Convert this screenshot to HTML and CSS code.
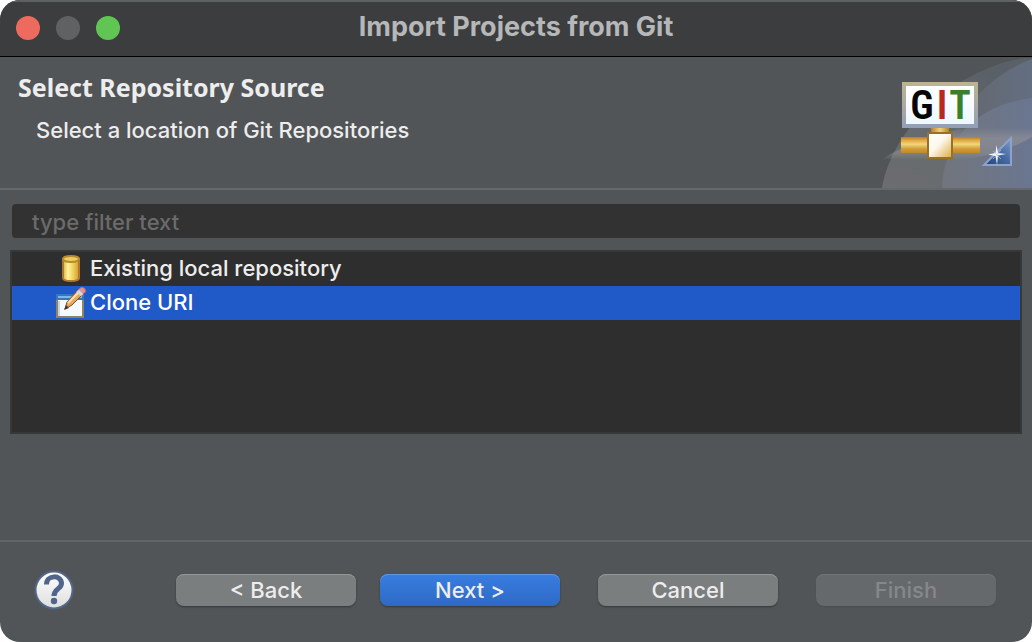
FILE: index.html
```html
<!DOCTYPE html>
<html lang="en">
<head>
<meta charset="utf-8">
<meta name="viewport" content="width=device-width, initial-scale=1">
<title>Import Projects from Git</title>
<link rel="stylesheet" href="styles.css">
</head>
<body>
<main class="dialog">
  <header class="titlebar">
    <div class="lights">
      <button class="light light-close" type="button" aria-label="Close"></button>
      <button class="light light-minimize" type="button" aria-label="Minimize" disabled></button>
      <button class="light light-zoom" type="button" aria-label="Zoom"></button>
    </div>
    <h1 class="title">Import Projects from Git</h1>
  </header>

  <section class="banner">
    <div class="banner-text">
      <h2 class="banner-heading">Select Repository Source</h2>
      <p class="banner-message">Select a location of Git Repositories</p>
    </div>
    <svg class="banner-art" viewBox="0 0 160 131" width="160" height="131" role="img" aria-label="GIT">
      <defs>
        <linearGradient id="ring" x1="0" y1="1" x2=".5" y2="0"><stop offset="0" stop-color="#6b6d6f"/><stop offset=".5" stop-color="#666a6e"/><stop offset="1" stop-color="#596067"/></linearGradient>
        <linearGradient id="sky" x1="0" y1="0" x2="1" y2="0"><stop offset="0" stop-color="#6a6e73"/><stop offset=".4" stop-color="#646a72"/><stop offset="1" stop-color="#636e82"/></linearGradient>
        <linearGradient id="inner" x1="0" y1="0" x2="1" y2="0"><stop offset="0" stop-color="#72757d"/><stop offset="1" stop-color="#6a7690"/></linearGradient>
        <linearGradient id="haze" x1="0" y1="0" x2="0" y2="1"><stop offset="0" stop-color="#929298" stop-opacity="0"/><stop offset=".35" stop-color="#929298" stop-opacity=".65"/><stop offset=".8" stop-color="#929298" stop-opacity=".5"/><stop offset="1" stop-color="#929298" stop-opacity="0"/></linearGradient>
        <linearGradient id="frame" x1="0" y1="0" x2="0" y2="1"><stop offset="0" stop-color="#bdb490"/><stop offset=".5" stop-color="#aaa9a2"/><stop offset="1" stop-color="#929fb9"/></linearGradient>
        <linearGradient id="paper" x1="0" y1="0" x2="0" y2="1"><stop offset="0" stop-color="#fff"/><stop offset="1" stop-color="#eef8ff"/></linearGradient>
        <linearGradient id="pipe" x1="0" y1="0" x2="0" y2="1"><stop offset="0" stop-color="#b97a2c"/><stop offset=".18" stop-color="#dda53a"/><stop offset=".45" stop-color="#f0d67c"/><stop offset=".75" stop-color="#d09a34"/><stop offset="1" stop-color="#c08a2a"/></linearGradient>
        <linearGradient id="neck" x1="0" y1="0" x2="1" y2="0"><stop offset="0" stop-color="#b8822a"/><stop offset=".5" stop-color="#efd27a"/><stop offset="1" stop-color="#b8822a"/></linearGradient>
        <linearGradient id="joint" x1="0" y1="0" x2="1" y2="1"><stop offset="0" stop-color="#fff"/><stop offset=".45" stop-color="#fdf8ec"/><stop offset="1" stop-color="#dba93d"/></linearGradient>
        <linearGradient id="sail" x1="0" y1="1" x2="1" y2="0"><stop offset="0" stop-color="#233f7e"/><stop offset=".5" stop-color="#4467a2"/><stop offset="1" stop-color="#7f9cc9"/></linearGradient>
      </defs>
      <path d="M10 131C20 70 85 12 152 1H160V131Z" fill="url(#ring)"/>
      <path d="M70 131C70 75 105 22 160 2V131Z" fill="url(#sky)"/>
      <path d="M70 131C72 83 103 48 160 41V131Z" fill="url(#inner)"/>
      <path d="M10 102Q60 72 112 70H160V80Q122 102 80 103Z" fill="url(#haze)"/>
      <rect x="30" y="25" width="76" height="46" fill="url(#frame)"/>
      <rect x="34" y="29" width="68" height="38" fill="url(#paper)"/>
      <g class="logo-text">
        <text x="50" y="62" fill="#050505">G</text>
        <text x="70" y="62" fill="#b92720">I</text>
        <text x="88" y="62" fill="#398127">T</text>
      </g>
      <rect x="59" y="71" width="18" height="5" fill="url(#neck)"/>
      <rect x="29" y="80" width="79" height="16" fill="url(#pipe)"/>
      <rect x="56" y="76" width="24" height="25" fill="url(#joint)" stroke="#987027" stroke-width="2"/>
      <path d="M112 108 139 81V108Z" fill="url(#sail)" stroke="#8ca2ca" stroke-width="2"/>
      <path d="M124.500 88 126 96 134 97 126 98.500 125 108 123.500 99 116 97.500 123.500 96Z" fill="#f3f6fb"/>
      <path d="M121 94 129 102M129 93 121 102" stroke="#b5c4e0" stroke-width=".7"/>
    </svg>
  </section>

  <section class="content">
    <input class="filter" type="text" placeholder="type filter text" aria-label="Filter">
    <ul class="sources" role="listbox" aria-label="Repository source" tabindex="0">
      <li class="source" role="option" aria-selected="false">
        <svg class="source-icon" viewBox="0 0 32 32" width="32" height="32" aria-hidden="true">
          <defs><linearGradient id="gold" x1="0" y1="0" x2="1" y2="0"><stop offset="0" stop-color="#d9ad3c"/><stop offset=".3" stop-color="#fff49b"/><stop offset=".6" stop-color="#f1d563"/><stop offset="1" stop-color="#d09a30"/></linearGradient></defs>
          <path d="M8 6V25C8 29 24 29 24 25V6Z" fill="url(#gold)" stroke="#ae792d" stroke-width="2"/>
          <ellipse cx="16" cy="6" rx="8" ry="3" fill="#ebcd61" stroke="#b88a29" stroke-width="2"/>
        </svg>
        <span class="source-name">Existing local repository</span>
      </li>
      <li class="source selected" role="option" aria-selected="true">
        <svg class="source-icon" viewBox="0 0 32 32" width="32" height="32" aria-hidden="true">
          <rect x="2" y="8" width="26" height="22" fill="#f5fbff" stroke="#8b8465" stroke-width="2"/>
          <path d="M1 7H29V13H1Z" fill="#3977b9"/><path d="M3 9H27V11H3Z" fill="#79b8e8"/>
          <path d="M3 14H27V29H3Z" fill="#f4faff"/><path d="M3 14H5V29H3Z" fill="#c6d4df"/>
          <path d="M10 22 12 15 23 3 28 7 17 18Z" fill="#e7a85c" stroke="#805027"/>
          <path d="M13 16 24 5" stroke="#ffe0a2" stroke-width="2"/>
          <path d="M22 4 25 1Q28-1 30 2T29 6L27 9Z" fill="#df9595" stroke="#b06d70"/>
          <path d="M21 5 24 3 28 7 26 9Z" fill="#d5dae2"/>
          <path d="M9 23 11 18 14 21Z" fill="#4a3529"/>
        </svg>
        <span class="source-name">Clone URI</span>
      </li>
    </ul>
  </section>

  <footer class="footer">
    <button class="help" type="button" aria-label="Help">
      <svg viewBox="0 0 40 40" width="40" height="40" aria-hidden="true">
        <defs><linearGradient id="pearl" x1="0" y1="0" x2="0" y2="1"><stop offset="0" stop-color="#fff"/><stop offset="1" stop-color="#dedede"/></linearGradient></defs>
        <circle cx="20" cy="20" r="18.500" fill="url(#pearl)" stroke="#526789" stroke-width="2"/>
        <path d="M12.500 14.500C12.500 4.500 27.500 4.500 27.500 13.500C27.500 19 20 18.500 20 26" fill="none" stroke="#50658a" stroke-width="5"/>
        <circle cx="20" cy="31" r="3.200" fill="#50658a"/>
      </svg>
    </button>
    <div class="actions">
      <div class="steps">
        <button class="button" type="button">&lt; Back</button>
        <button class="button primary" type="button">Next &gt;</button>
      </div>
      <button class="button" type="button">Cancel</button>
      <button class="button" type="button" disabled>Finish</button>
    </div>
  </footer>
</main>
</body>
</html>
```

FILE: styles.css
```css
* {
  box-sizing: border-box;
}

body {
  margin: 0;
  background: #fff;
  color: #ededed;
  font: 500 22px/28px Inter, Roboto, sans-serif;
}

h1, h2, p, ul {
  margin: 0;
  padding: 0;
}

button, input {
  font: inherit;
}

.dialog {
  display: flex;
  flex-direction: column;
  min-height: 100vh;
  overflow: hidden;
  border-radius: 20px;
  background: #515557;
}

.titlebar {
  display: grid;
  grid-template-columns: 1fr auto 1fr;
  align-items: center;
  height: 57px;
  padding: 0 16px 2px;
  border-top: 2px solid #5e6162;
  border-bottom: 1px solid #000;
  background: #3c3d3e;
}

.lights {
  display: flex;
  gap: 16px;
}

.light {
  width: 24px;
  height: 24px;
  padding: 0;
  border: 0;
  border-radius: 50%;
}

.light-close {
  background: #ed6a5e;
}

.light-minimize {
  background: #606163;
}

.light-zoom {
  background: #61c554;
}

.title {
  padding-bottom: 2px;
  color: #b6b7b8;
  font-size: 27px;
  font-weight: 700;
  line-height: 32px;
}

.banner {
  display: flex;
  justify-content: space-between;
  border-bottom: 2px solid #66696b;
}

.banner-text {
  padding: 15px 18px;
}

.banner-heading {
  font: 700 25px/30px "Noto Sans", "Open Sans", sans-serif;
}

.banner-message {
  padding: 14px 18px 0;
}

.banner-art {
  flex: none;
}

.logo-text {
  font: 600 40px "Liberation Sans Narrow", "Roboto Condensed", Roboto, sans-serif;
  text-anchor: middle;
}

.content {
  flex: 1;
  padding: 14px 10px;
}

.filter {
  display: block;
  width: calc(100% - 4px);
  height: 34px;
  margin: 0 2px 12px;
  padding: 2px 20px 0;
  border: 0;
  border-radius: 4px;
  background: #323232;
  color: #ededed;
}

.filter::placeholder {
  color: #6b6b6b;
  opacity: 1;
}

.sources {
  min-height: 184px;
  border: 2px solid #373838;
  background: #2e2e2e;
  list-style: none;
}

.source {
  display: flex;
  align-items: center;
  gap: 3px;
  height: 34px;
  padding-left: 43px;
}

.source-name {
  padding-bottom: 2px;
}

.selected {
  background: #2059c8;
  color: #fff;
}

.source-icon {
  flex: none;
}

.footer {
  display: flex;
  align-items: center;
  justify-content: space-between;
  min-height: 102px;
  padding: 0 36px 4px 34px;
  border-top: 2px solid #626668;
}

.help {
  display: flex;
  padding: 0;
  border: 0;
  background: none;
}

.actions {
  display: flex;
  gap: 38px;
}

.steps {
  display: flex;
  gap: 24px;
}

.button {
  width: 180px;
  height: 32px;
  padding: 0;
  border: 0;
  border-radius: 8px;
  background: #7b7e7f;
  box-shadow: inset 0 1px #959798, 0 1px 2px #34383a;
  color: #ededed;
}

.primary {
  background: linear-gradient(#387de1, #2e6ac4);
  box-shadow: inset 0 1px #6296e3, 0 1px 2px #34383a;
}

.button:disabled {
  background: #65696b;
  box-shadow: inset 0 1px #707476, 0 1px 1px #4a4e50;
  color: #85888a;
}
```
